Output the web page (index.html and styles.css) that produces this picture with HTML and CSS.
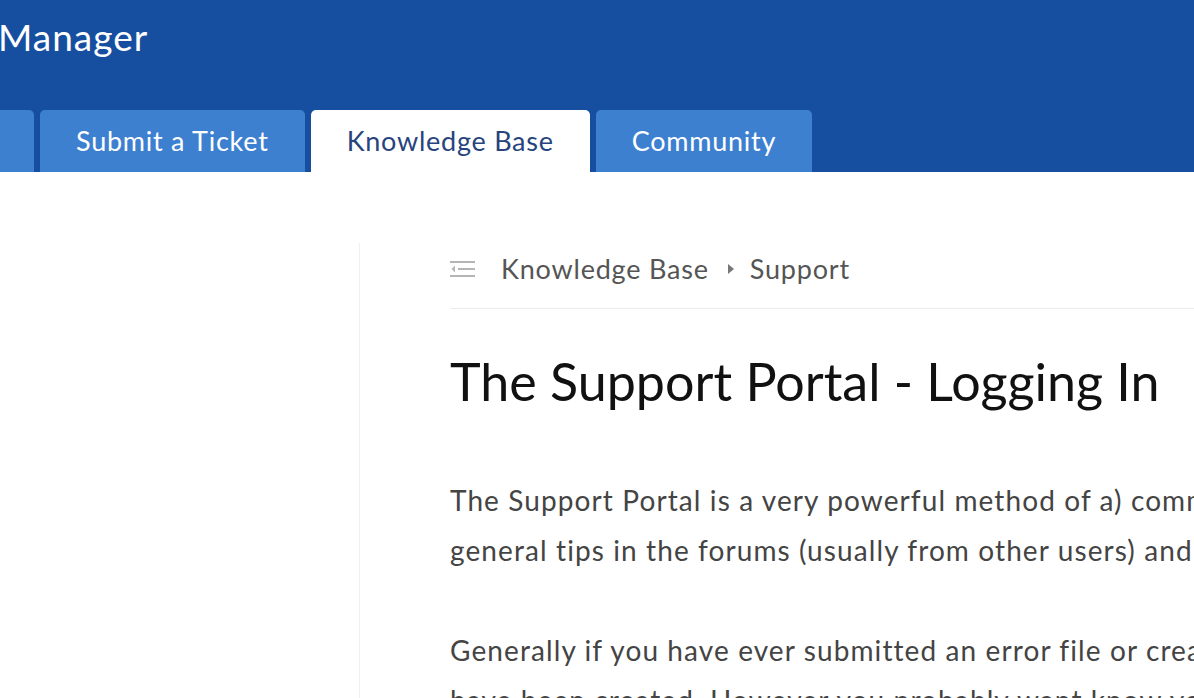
FILE: index.html
```html
<!DOCTYPE html>
<html>
<head>
<meta charset="utf-8">
<title>Knowledge Base - The Support Portal - Logging In</title>
<link rel="stylesheet" href="styles.css">
</head>
<body>
<header class="header">
  <div class="brand">Manager</div>
  <nav class="tabs">
    <a class="tab tab-home">Home</a>
    <a class="tab">Submit a Ticket</a>
    <a class="tab tab-active">Knowledge Base</a>
    <a class="tab">Community</a>
  </nav>
</header>
<div class="page">
  <aside class="sidebar"></aside>
  <main class="main">
    <div class="crumbs">
      <svg class="crumb-icon" width="26" height="18" viewBox="0 0 26 18">
        <rect x="0" y="1" width="25" height="2" fill="#b5b5b5"/>
        <rect x="8" y="8" width="17" height="2" fill="#b5b5b5"/>
        <rect x="0" y="15" width="25" height="2" fill="#b5b5b5"/>
        <path d="M5 5.5 L1.5 9 L5 12.5 Z" fill="#b5b5b5"/>
      </svg>
      <a class="crumb">Knowledge Base</a>
      <svg class="crumb-sep" width="7" height="10" viewBox="0 0 7 10"><path d="M0 0 L6 5 L0 10 Z" fill="#777"/></svg>
      <a class="crumb">Support</a>
    </div>
    <h1 class="title">The Support Portal - Logging In</h1>
    <p class="text">The Support Portal is a very powerful method of a) communicating with us, b) finding answers in the knowledge base and c) getting<br>general tips in the forums (usually from other users) and staff.</p>
    <p class="text">Generally if you have ever submitted an error file or created a ticket with us then an account for you will automatically<br>have been created. However you probably want know your password to log in.</p>
  </main>
</div>
</body>
</html>
```
FILE: styles.css
```css
html, body {
  margin: 0;
  padding: 0;
  overflow: hidden;
}
body {
  font-family: Lato, "Liberation Sans", sans-serif;
  background: #fff;
  width: 1194px;
}
.header {
  background: #174fa0;
  height: 172px;
  display: flex;
  flex-direction: column;
}
.brand {
  height: 110px;
  color: #fff;
  font-size: 37px;
  letter-spacing: 1px;
  line-height: 73px;
  margin-left: -2px;
  white-space: nowrap;
}
.tabs {
  display: flex;
  gap: 6px;
  height: 62px;
  margin-left: -120px;
}
.tab {
  display: block;
  background: #3d80d0;
  color: #fff;
  font-size: 27px;
  letter-spacing: 0.75px;
  line-height: 62px;
  padding: 0 36px;
  border-radius: 5px 5px 0 0;
  white-space: nowrap;
}
.tab-home {
  width: 82px;
}
.tab-active {
  background: #fff;
  color: #27447e;
}
.page {
  display: flex;
  padding-top: 71px;
}
.sidebar {
  width: 359px;
  flex: none;
  border-right: 1px solid #f0f0f0;
  min-height: 500px;
}
.main {
  flex: none;
  width: 1400px;
  margin-left: 90px;
}
.crumbs {
  display: flex;
  align-items: center;
  box-sizing: border-box;
  height: 66px;
  padding-bottom: 14px;
  border-bottom: 1px solid #ececec;
}
.crumb-icon {
  margin-right: 25px;
}
.crumb {
  font-size: 27px;
  letter-spacing: 0.8px;
  color: #555;
}
.crumb-sep {
  margin: 0 15px 0 19px;
}
.title {
  font-weight: 400;
  font-size: 52px;
  color: #111;
  margin: 35px 0 0;
  line-height: 74px;
}
.text {
  font-size: 28px;
  letter-spacing: 1.1px;
  line-height: 50px;
  color: #444;
  margin: 57px 0 50px;
  white-space: nowrap;
}
.text + .text {
  margin-top: 50px;
}
```
